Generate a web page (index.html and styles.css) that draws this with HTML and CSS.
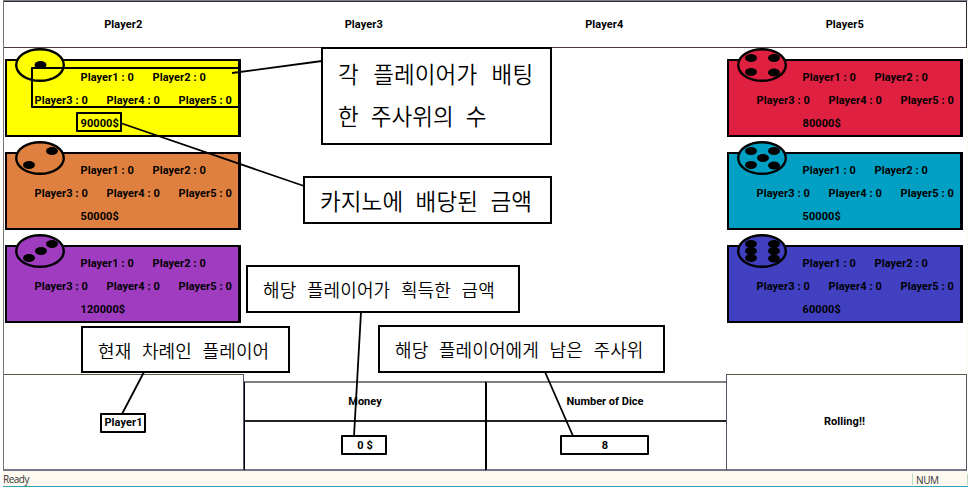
FILE: index.html
```html
<!DOCTYPE html>
<html lang="ko">
<head>
<meta charset="utf-8">
<title>Casino Dice</title>
<link rel="stylesheet" href="styles.css">
</head>
<body>
<div class="window">
  <header class="players"><span>Player2</span><span>Player3</span><span>Player4</span><span>Player5</span></header>
  <main class="board">
    <div class="column">
      <section class="casino yellow">
        <svg class="die" viewBox="0 0 50 34"><ellipse class="face" cx="25" cy="17" rx="23.8" ry="15.8"/><ellipse cx="25.5" cy="17" rx="6" ry="4"/></svg>
        <div class="bets first"><span>Player1 : 0</span><span>Player2 : 0</span></div>
        <div class="bets"><span>Player3 : 0</span><span>Player4 : 0</span><span>Player5 : 0</span></div>
        <div class="bets first"><span>90000$</span></div>
      </section>
      <section class="casino orange">
        <svg class="die" viewBox="0 0 50 34"><ellipse class="face" cx="25" cy="17" rx="23.8" ry="15.8"/><ellipse cx="37" cy="10" rx="6" ry="4"/><ellipse cx="14" cy="24" rx="6" ry="4"/></svg>
        <div class="bets first"><span>Player1 : 0</span><span>Player2 : 0</span></div>
        <div class="bets"><span>Player3 : 0</span><span>Player4 : 0</span><span>Player5 : 0</span></div>
        <div class="bets first"><span>50000$</span></div>
      </section>
      <section class="casino purple">
        <svg class="die" viewBox="0 0 50 34"><ellipse class="face" cx="25" cy="17" rx="23.8" ry="15.8"/><ellipse cx="37" cy="10" rx="6" ry="4"/><ellipse cx="26" cy="17" rx="6" ry="4"/><ellipse cx="14" cy="24" rx="6" ry="4"/></svg>
        <div class="bets first"><span>Player1 : 0</span><span>Player2 : 0</span></div>
        <div class="bets"><span>Player3 : 0</span><span>Player4 : 0</span><span>Player5 : 0</span></div>
        <div class="bets first"><span>120000$</span></div>
      </section>
    </div>
    <div class="column">
      <section class="casino red">
        <svg class="die" viewBox="0 0 50 34"><ellipse class="face" cx="25" cy="17" rx="23.8" ry="15.8"/><ellipse cx="14" cy="10" rx="6" ry="4"/><ellipse cx="37" cy="10" rx="6" ry="4"/><ellipse cx="14" cy="24" rx="6" ry="4"/><ellipse cx="37" cy="24.5" rx="6" ry="4"/></svg>
        <div class="bets first"><span>Player1 : 0</span><span>Player2 : 0</span></div>
        <div class="bets"><span>Player3 : 0</span><span>Player4 : 0</span><span>Player5 : 0</span></div>
        <div class="bets first"><span>80000$</span></div>
      </section>
      <section class="casino cyan">
        <svg class="die" viewBox="0 0 50 34"><ellipse class="face" cx="25" cy="17" rx="23.8" ry="15.8"/><ellipse cx="14" cy="10" rx="6" ry="4"/><ellipse cx="37" cy="10" rx="6" ry="4"/><ellipse cx="26" cy="17" rx="6" ry="4"/><ellipse cx="14" cy="24" rx="6" ry="4"/><ellipse cx="37" cy="24.5" rx="6" ry="4"/></svg>
        <div class="bets first"><span>Player1 : 0</span><span>Player2 : 0</span></div>
        <div class="bets"><span>Player3 : 0</span><span>Player4 : 0</span><span>Player5 : 0</span></div>
        <div class="bets first"><span>50000$</span></div>
      </section>
      <section class="casino blue">
        <svg class="die" viewBox="0 0 50 34"><ellipse class="face" cx="25" cy="17" rx="23.8" ry="15.8"/><ellipse cx="14" cy="10" rx="6" ry="4"/><ellipse cx="37" cy="10" rx="6" ry="4"/><ellipse cx="14" cy="17" rx="6" ry="4"/><ellipse cx="37" cy="17" rx="6" ry="4"/><ellipse cx="14" cy="24" rx="6" ry="4"/><ellipse cx="37" cy="24.5" rx="6" ry="4"/></svg>
        <div class="bets first"><span>Player1 : 0</span><span>Player2 : 0</span></div>
        <div class="bets"><span>Player3 : 0</span><span>Player4 : 0</span><span>Player5 : 0</span></div>
        <div class="bets first"><span>60000$</span></div>
      </section>
    </div>
  </main>
  <footer class="controls">
    <div class="panel current"><span>Player1</span></div>
    <div class="stat"><div class="label">Money</div><div class="value">0 $</div></div>
    <div class="stat"><div class="label">Number of Dice</div><div class="value">8</div></div>
    <div class="panel roll"><span>Rolling!!</span></div>
  </footer>
</div>
<div class="status"><span>Ready</span><span class="num">NUM</span></div>

<div class="notes">
  <svg class="leaders" viewBox="0 0 968 491">
    <path d="M232 73L322 61M122 123.500L304 186M361 312L354 436M144 372L122 414M545 372L573 436"/>
    <path class="marks" d="M32 68H239V107H32ZM77 113H121V131H77ZM101 414H145V432H101ZM342 436H386V454H342ZM561 436H648V454H561Z"/>
  </svg>
  <div class="note large bets-note"><span>각 플레이어가 배팅</span><span class="last">한 주사위의 수</span></div>
  <div class="note large payout-note"><span>카지노에 배당된 금액</span></div>
  <div class="note money-note"><span>해당 플레이어가 획득한 금액</span></div>
  <div class="note current-note"><span>현재 차례인 플레이어</span></div>
  <div class="note dice-note"><span>해당 플레이어에게 남은 주사위</span></div>
</div>
</body>
</html>
```
FILE: styles.css
```css
* { box-sizing: border-box; }
body {
  margin: 0;
  width: 968px;
  height: 491px;
  overflow: hidden;
  position: relative;
  background: #fff;
  color: #000;
  font: 700 11px/23px Roboto, "Liberation Sans", sans-serif;
  letter-spacing: 0.08px;
}
.window {
  width: 965px;
  height: 471px;
  margin-left: 3px;
  border-top: 1px solid #808080;
  border-left: 1px solid #777;
  border-right: 1px solid #fffaf0;
  display: flex;
  flex-direction: column;
}
.players {
  width: 963px;
  height: 47px;
  border: 1px solid #2c2840;
  border-left: 0;
  border-bottom-color: #4a3838;
  display: grid;
  grid-template-columns: repeat(4, 1fr);
  align-items: center;
  text-align: center;
  text-indent: -2px;
}
.board {
  flex: 1;
  display: flex;
  justify-content: space-between;
  padding: 11px 4px 0 1px;
}
.column { display: flex; flex-direction: column; gap: 15px; }
.casino {
  width: 236px;
  height: 78px;
  border: 2px solid #000;
  border-right-width: 3px;
  padding-top: 5px;
  position: relative;
  background: var(--paint);
}
.yellow { --paint: #ffff00; }
.orange { --paint: #e08040; }
.purple { --paint: #a03cc0; }
.red { --paint: #e02040; }
.cyan { --paint: #00a0c4; }
.blue { --paint: #4040c0; }
.die { position: absolute; left: 8px; top: -13px; width: 50px; height: 34px; }
.face { fill: var(--paint); stroke: #000; stroke-width: 2.4; }
.bets { position: relative; display: flex; padding-left: 27.5px; height: 23px; }
.first { padding-left: 73.5px; }
.bets span { flex: 0 0 72px; white-space: nowrap; }
.controls {
  display: grid;
  grid-template-columns: 240px 241px 241px 241px;
  align-items: end;
  height: 97px;
  text-align: center;
}
.panel {
  height: 97px;
  border: 1px solid #555568;
  border-top-color: #555b48;
  border-bottom: 2px solid #77778c;
  display: flex;
  align-items: center;
  justify-content: center;
}
.current { border-left: 0; }
.roll { padding: 0 4px 2px 0; }
.stat {
  height: 90px;
  border-top: 2px solid #808080;
  border-bottom: 2px solid #77778c;
  border-left: 1px solid #000;
}
.stat + .stat { border-left-width: 2px; padding-right: 3px; }
.label { height: 39px; line-height: 38px; border-bottom: 2px solid #222; letter-spacing: 0; }
.stat + .stat .label { margin-right: -3px; padding-right: 3px; }
.value { line-height: 48px; }
.status {
  height: 16px;
  margin-left: 3px;
  border-bottom: 1px solid #38a0b8;
  background: #fffaf0;
  color: #333;
  font: 400 10px/17px "Open Sans", sans-serif;
  letter-spacing: -0.5px;
  display: flex;
  justify-content: space-between;
}
.num { width: 56px; height: 11px; margin-top: 3px; line-height: 12px; padding-left: 3px; border-left: 1px solid #b8d8c0; border-right: 1px solid #b8d8c0; letter-spacing: -0.4px; }
.leaders { position: absolute; left: 0; top: 0; width: 968px; height: 491px; fill: none; stroke: #000; stroke-width: 1.8; }
.marks { stroke-width: 2; stroke-linejoin: round; }
.note {
  position: absolute;
  border: 2px solid #000;
  background: #fff;
  display: flex;
  flex-direction: column;
  justify-content: center;
  padding-left: 15px;
  white-space: nowrap;
  font: 350 18px/44px "Noto Sans CJK KR", sans-serif;
  letter-spacing: 0.1px;
  word-spacing: 5.5px;
}
.large { font-size: 22.5px; line-height: 42px; letter-spacing: 0.1px; word-spacing: 8px; }
.last { word-spacing: 5.5px; }
.bets-note { left: 321px; top: 47px; width: 231px; height: 98px; padding-bottom: 4px; }
.payout-note { left: 303px; top: 176px; width: 249px; height: 48px; word-spacing: 6px; }
.money-note { left: 246px; top: 265px; width: 274px; height: 48px; }
.current-note { left: 81px; top: 326px; width: 209px; height: 47px; }
.dice-note { left: 378px; top: 325px; width: 287px; height: 48px; }
```
